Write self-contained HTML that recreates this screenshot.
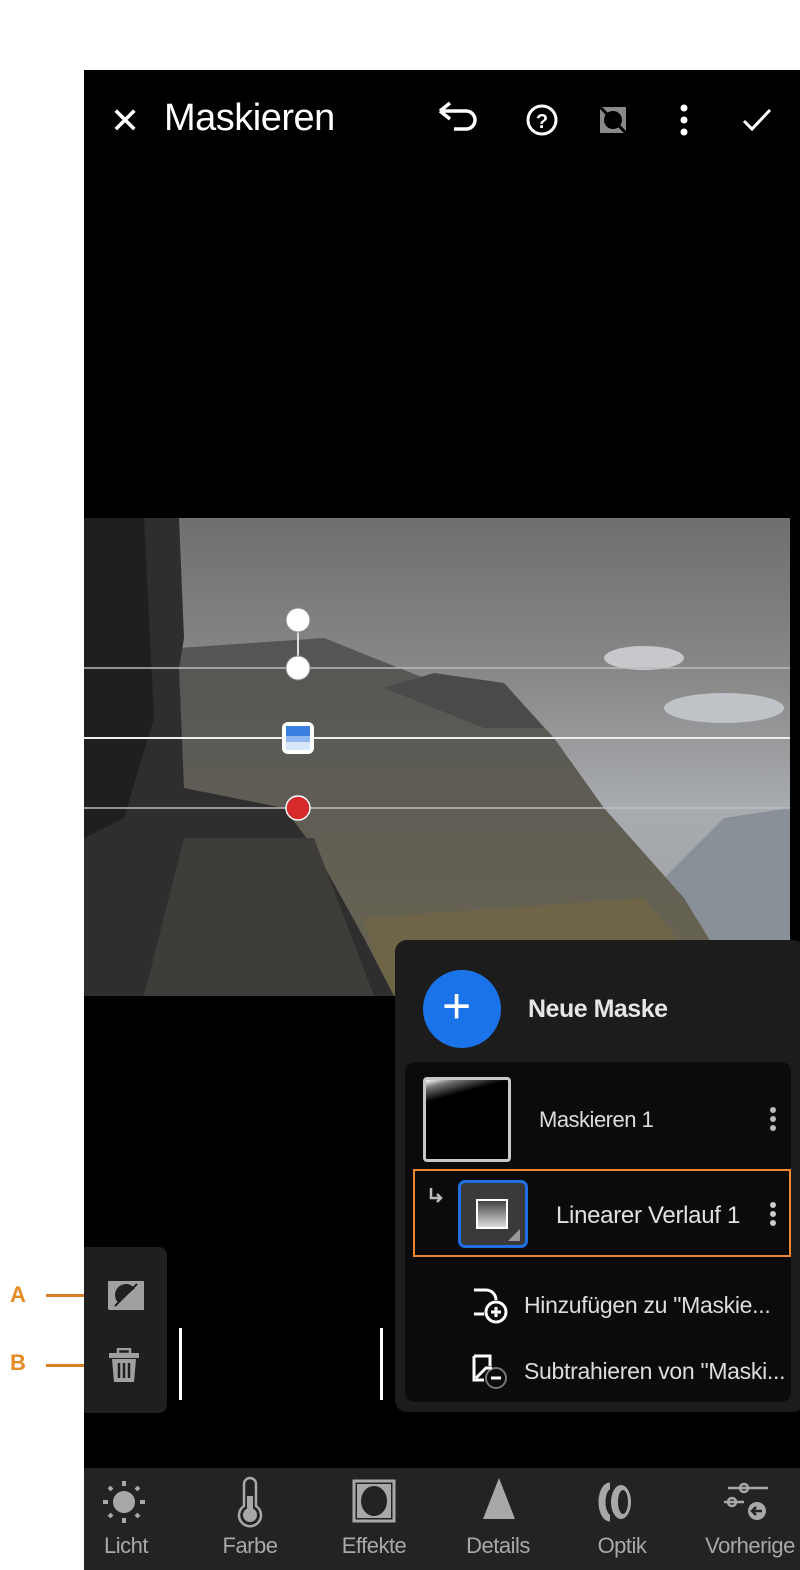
<!DOCTYPE html>
<html><head><meta charset="utf-8"><style>
*{margin:0;padding:0;box-sizing:border-box}
body{width:800px;height:1570px;background:#fff;position:relative;overflow:hidden;font-family:"Liberation Sans",sans-serif}
.abs{position:absolute}
.app{left:84px;top:70px;width:716px;height:1500px;background:#000}
.t{color:#fff;position:absolute;white-space:nowrap}
.nav{left:84px;top:1468px;width:716px;height:102px;background:#232323}
.nl{position:absolute;top:1533px;color:#a8a8a8;font-size:22px;letter-spacing:-0.5px;text-align:center;width:120px}
</style></head><body>
<div class="abs app"></div>
<!-- top bar -->
<div class="t" style="left:110px;top:100px;font-size:36px;font-weight:300">✕</div>
<div class="t" style="left:164px;top:97px;font-size:38px;letter-spacing:-0.5px">Maskieren</div>
<svg class="abs" style="left:430px;top:95px" width="350" height="50" viewBox="0 0 350 50">
 <path d="M10 16 L20 8 M10 16 L20 24 M10 16 H36 a9 9 0 0 1 0 18 H24" stroke="#fff" stroke-width="3.5" fill="none"/>
 <circle cx="112" cy="25" r="14" stroke="#fff" stroke-width="3" fill="none"/>
 <text x="112" y="33" fill="#fff" font-size="20" font-weight="bold" text-anchor="middle" font-family="Liberation Sans">?</text>
 <rect x="170" y="12" width="26" height="26" fill="#8a8a8a"/>
 <circle cx="183" cy="25" r="9" fill="#000"/>
 <path d="M170 12 L196 38" stroke="#000" stroke-width="3"/>
 <circle cx="254" cy="13" r="3.5" fill="#fff"/><circle cx="254" cy="25" r="3.5" fill="#fff"/><circle cx="254" cy="37" r="3.5" fill="#fff"/>
 <path d="M314 26 L322 34 L340 15" stroke="#fff" stroke-width="3" fill="none"/>
</svg>
<!-- photo -->
<svg class="abs" style="left:84px;top:518px" width="706" height="478" viewBox="0 0 706 478">
 <defs>
  <linearGradient id="sky" x1="0" y1="0" x2="0" y2="1"><stop offset="0" stop-color="#6f6f6f"/><stop offset="0.35" stop-color="#8a8a8a"/><stop offset="0.6" stop-color="#a8abaf"/><stop offset="1" stop-color="#9aa0a6"/></linearGradient>
  <linearGradient id="mt" x1="0" y1="0" x2="0" y2="1"><stop offset="0" stop-color="#555"/><stop offset="1" stop-color="#6a6552"/></linearGradient>
 </defs>
 <rect width="706" height="478" fill="url(#sky)"/>
 <path d="M560 380 L640 300 L706 290 L706 478 L560 478Z" fill="#8a9098"/>
 <path d="M95 130 L240 120 L340 160 L420 165 L470 220 L520 290 L600 380 L660 478 L200 478 L95 478Z" fill="url(#mt)"/>
 <path d="M300 170 L350 155 L420 165 L460 210 L400 210 Z" fill="#4a4a4a"/>
 <path d="M280 400 L560 380 L640 478 L300 478Z" fill="#6e6448"/>
 <path d="M0 0 L95 0 L100 120 L95 150 L100 270 L150 280 L200 290 L230 330 L280 420 L310 478 L0 478Z" fill="#2e2e2e"/>
 <path d="M0 0 L60 0 L70 200 L40 300 L0 320Z" fill="#1f1f1f"/>
 <path d="M100 320 L230 320 L290 478 L60 478Z" fill="#3f3d3a"/>
 <ellipse cx="560" cy="140" rx="40" ry="12" fill="#c6c8cc"/>
 <ellipse cx="640" cy="190" rx="60" ry="15" fill="#bfc2c7"/>
 <path d="M0 150 H706" stroke="#bbb" stroke-width="1.5"/>
 <path d="M0 220 H706" stroke="#eee" stroke-width="2"/>
 <path d="M0 290 H706" stroke="#bbb" stroke-width="1.5"/>
 <line x1="214" y1="102" x2="214" y2="150" stroke="#ddd" stroke-width="2"/>
 <ellipse cx="214" cy="102" rx="12" ry="12" fill="#fff" stroke="#888"/>
 <ellipse cx="214" cy="150" rx="12" ry="12" fill="#fff" stroke="#888"/>
 <rect x="198" y="204" width="32" height="32" rx="6" fill="#fff"/>
 <rect x="202" y="208" width="24" height="10" fill="#3a7fe0"/>
 <rect x="202" y="218" width="24" height="6" fill="#8fb9f0"/>
 <rect x="202" y="224" width="24" height="8" fill="#d6e6fb"/>
 <circle cx="214" cy="290" r="12" fill="#d62a2a" stroke="#fff" stroke-width="1.5"/>
</svg>
<!-- mask panel -->
<div class="abs" style="left:395px;top:940px;width:410px;height:472px;background:#1c1c1c;border-radius:12px"></div>
<div class="abs" style="left:423px;top:970px;width:78px;height:78px;border-radius:50%;background:#1a73e8"></div>
<div class="t" style="left:442px;top:981px;font-size:50px;font-weight:300;line-height:50px">+</div>
<div class="t" style="left:528px;top:995px;font-size:25px;font-weight:bold;color:#e6e6e6;letter-spacing:-0.5px">Neue Maske</div>
<div class="abs" style="left:405px;top:1062px;width:386px;height:340px;background:#0b0b0b;border-radius:10px"></div>
<div class="abs" style="left:423px;top:1077px;width:88px;height:85px;border:3px solid #c8c8c8;border-radius:4px;background:#000;background-image:linear-gradient(165deg,#fff 0%,#777 8%,#000 22%)"></div>
<div class="t" style="left:539px;top:1107px;font-size:22px;color:#ddd;letter-spacing:-0.5px">Maskieren 1</div>
<svg class="abs" style="left:765px;top:1105px" width="16" height="30"><circle cx="8" cy="5" r="3" fill="#bbb"/><circle cx="8" cy="14" r="3" fill="#bbb"/><circle cx="8" cy="23" r="3" fill="#bbb"/></svg>
<div class="abs" style="left:413px;top:1169px;width:378px;height:88px;border:2.5px solid #ef8630"></div>
<svg class="abs" style="left:426px;top:1186px" width="20" height="20"><path d="M5 2 V12 H14 M11 8 L15 12 L11 16" stroke="#bbb" stroke-width="2.5" fill="none"/></svg>
<div class="abs" style="left:458px;top:1180px;width:70px;height:68px;border:3px solid #1f6fe0;border-radius:7px;background:#3a3a3a"></div>
<div class="abs" style="left:476px;top:1199px;width:32px;height:30px;border:2px solid #fff;background:linear-gradient(#444,#ddd)"></div>
<svg class="abs" style="left:508px;top:1229px" width="12" height="12"><path d="M12 0 V12 H0Z" fill="#999"/></svg>
<div class="t" style="left:556px;top:1202px;font-size:24px;color:#e0e0e0;letter-spacing:-0.3px">Linearer Verlauf 1</div>
<svg class="abs" style="left:765px;top:1200px" width="16" height="30"><circle cx="8" cy="5" r="3" fill="#ccc"/><circle cx="8" cy="14" r="3" fill="#ccc"/><circle cx="8" cy="23" r="3" fill="#ccc"/></svg>
<svg class="abs" style="left:472px;top:1288px" width="40" height="40"><path d="M2 2 H14 a10 10 0 0 1 10 10 M12 26 H2 Z" stroke="#fff" stroke-width="3" fill="none"/><circle cx="24" cy="24" r="10" stroke="#fff" stroke-width="3" fill="#0b0b0b"/><path d="M19 24 H29 M24 19 V29" stroke="#fff" stroke-width="3"/></svg>
<div class="t" style="left:524px;top:1292px;font-size:23px;color:#ddd;letter-spacing:-0.3px">Hinzufügen zu "Maskie...</div>
<svg class="abs" style="left:472px;top:1354px" width="40" height="40"><path d="M2 2 H18 V12 M12 26 H2 V2" stroke="#fff" stroke-width="3" fill="none"/><circle cx="24" cy="24" r="10" stroke="#777" stroke-width="2" fill="#0b0b0b"/><path d="M19 24 H29" stroke="#fff" stroke-width="3"/><path d="M4 24 L14 14 H20" stroke="#fff" stroke-width="3" fill="none"/></svg>
<div class="t" style="left:524px;top:1358px;font-size:23px;color:#ddd;letter-spacing:-0.3px">Subtrahieren von "Maski...</div>
<!-- left tool panel -->
<div class="abs" style="left:84px;top:1247px;width:83px;height:166px;background:#1f1f1f;border-radius:0 8px 8px 0"></div>
<svg class="abs" style="left:107px;top:1280px" width="38" height="32"><rect x="1" y="1" width="36" height="28" fill="#a0a0a0"/><circle cx="19" cy="15" r="11" fill="#1f1f1f"/><path d="M1 30 L37 1 L37 30Z" fill="#a0a0a0"/><path d="M8 26 L30 4" stroke="#1f1f1f" stroke-width="2"/></svg>
<svg class="abs" style="left:108px;top:1348px" width="34" height="36"><rect x="10" y="1" width="12" height="5" fill="none" stroke="#a0a0a0" stroke-width="2.5"/><rect x="1" y="5" width="30" height="5" fill="#a0a0a0"/><path d="M4 11 H28 L26 34 H6Z" fill="#a0a0a0"/><path d="M11 15 V30 M16 15 V30 M21 15 V30" stroke="#1f1f1f" stroke-width="2.5"/></svg>
<div class="abs" style="left:179px;top:1328px;width:3px;height:72px;background:#fff"></div>
<div class="abs" style="left:380px;top:1328px;width:3px;height:72px;background:#fff"></div>
<!-- labels A/B -->
<div class="t" style="left:10px;top:1282px;font-size:22px;font-weight:bold;color:#e68a25">A</div>
<div class="abs" style="left:46px;top:1294px;width:38px;height:3px;background:#d77f22"></div>
<div class="t" style="left:10px;top:1350px;font-size:22px;font-weight:bold;color:#e68a25">B</div>
<div class="abs" style="left:46px;top:1364px;width:38px;height:3px;background:#d77f22"></div>
<!-- bottom nav -->
<div class="abs nav"></div>
<svg class="abs" style="left:84px;top:1476px" width="716" height="56" viewBox="0 0 716 56">
 <g fill="#a8a8a8" stroke="#a8a8a8">
  <circle cx="40" cy="26" r="11" stroke="none"/>
  <g stroke-width="4"><path d="M40 5 V10 M40 42 V47 M19 26 H24 M56 26 H61 M25 11 L28 14 M52 38 L55 41 M55 11 L52 14 M28 38 L25 41"/></g>
 </g>
 <g fill="none" stroke="#a8a8a8" stroke-width="2.5"><path d="M160 30 V8 a6 6 0 0 1 12 0 V30 a11 11 0 1 1 -12 0Z"/></g>
 <rect x="163" y="20" width="6" height="14" fill="#a8a8a8"/><circle cx="166" cy="39" r="7" fill="#a8a8a8"/>
 <rect x="270" y="5" width="40" height="40" fill="none" stroke="#a8a8a8" stroke-width="3"/>
 <path d="M273 8 H307 V42 H273Z M290 10 a13 15 0 1 0 0.1 0Z" fill="#a8a8a8" fill-rule="evenodd"/>
 <path d="M415 2 L399 43 H431Z" fill="#a8a8a8"/>
 <path d="M526 10 a8 16 0 0 0 0 32" fill="none" stroke="#a8a8a8" stroke-width="7"/>
 <ellipse cx="537" cy="26" rx="10" ry="17" fill="#a8a8a8"/>
 <ellipse cx="539" cy="26" rx="5" ry="12" fill="#232323"/>
 <g fill="none" stroke="#a8a8a8" stroke-width="2.5"><path d="M644 12 H684 M640 26 H660"/><circle cx="660" cy="12" r="4"/><circle cx="648" cy="26" r="4"/></g>
 <circle cx="673" cy="35" r="9" fill="#a8a8a8"/><path d="M678 35 H668 M672 31 L668 35 L672 39" stroke="#232323" stroke-width="2.5" fill="none"/>
</svg>
<div class="nl" style="left:66px">Licht</div>
<div class="nl" style="left:190px">Farbe</div>
<div class="nl" style="left:314px">Effekte</div>
<div class="nl" style="left:438px">Details</div>
<div class="nl" style="left:562px">Optik</div>
<div class="nl" style="left:690px">Vorherige</div>
</body></html>
